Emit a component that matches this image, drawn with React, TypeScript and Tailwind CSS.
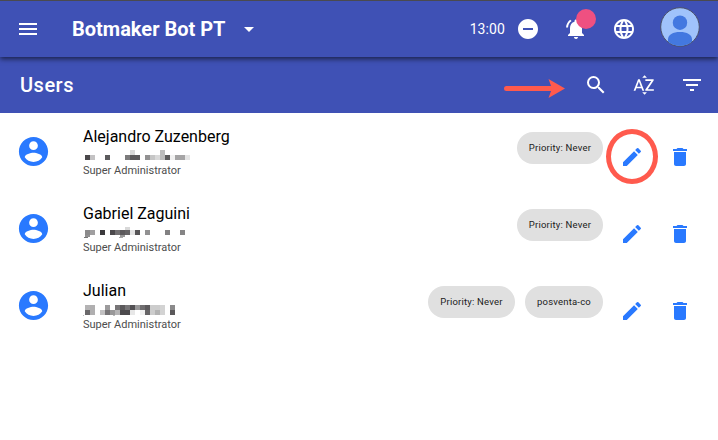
import type { ReactNode } from "react";
import {
  MdArrowDropDown,
  MdDelete,
  MdEdit,
  MdFilterList,
  MdLanguage,
  MdMenu,
  MdNotificationsActive,
  MdRemoveCircle,
  MdSearch,
} from "react-icons/md";

// x, y, width, height, fill; relative to the masked line of a row
type Cell = [number, number, number, number, string];

interface User {
  name: string;
  role: string;
  chips: { label: string; width: string }[];
  mask: Cell[];
  highlighted?: boolean;
}

const users: User[] = [
  {
    name: "Alejandro Zuzenberg",
    role: "Super Administrator",
    chips: [{ label: "Priority: Never", width: "w-[86px]" }],
    highlighted: true,
    mask: [
      [0, 5, 5, 5, "#4a484b"], [5, 5, 5, 5, "#c3c2c3"], [20, 5, 5, 5, "#5c5b5d"],
      [40, 5, 5, 5, "#7c7b7c"], [45, 0, 5, 5, "#d8d8d8"], [45, 5, 10, 5, "#5b595b"],
      [60, 5, 5, 5, "#929192"], [65, 5, 5, 5, "#c6c6c6"], [70, 5, 5, 5, "#d9d9d9"],
      [75, 0, 5, 10, "#bcbcbc"], [80, 5, 5, 5, "#5c5b5c"], [85, 5, 5, 5, "#f1f1f1"],
      [90, 5, 10, 5, "#a5a4a5"], [100, 5, 5, 5, "#e4e4e4"],
    ],
  },
  {
    name: "Gabriel Zaguini",
    role: "Super Administrator",
    chips: [{ label: "Priority: Never", width: "w-[86px]" }],
    mask: [
      [0, 3, 5, 5, "#8b8a8b"], [5, 3, 5, 5, "#a09fa0"], [0, 8, 5, 2, "#919091"], [-1, 10, 4, 1, "#777777"],
      [15, 3, 5, 5, "#3b393c"], [25, 3, 5, 5, "#4b494c"], [30, 3, 5, 5, "#716f71"],
      [35, 3, 5, 5, "#5c5a5c"], [40, 3, 5, 5, "#656365"], [40, 0, 5, 3, "#d8d8d8"],
      [35, 8, 5, 2, "#999999"], [34, 10, 4, 1, "#a8a8a8"],
      [45, 3, 5, 5, "#e4e4e4"], [50, 3, 5, 5, "#565456"], [60, 3, 5, 5, "#929192"],
      [80, 3, 5, 5, "#828182"], [95, 3, 5, 5, "#858485"],
    ],
  },
  {
    name: "Julian",
    role: "Super Administrator",
    chips: [
      { label: "Priority: Never", width: "w-[87px]" },
      { label: "posventa-co", width: "w-[78px]" },
    ],
    mask: [
      [0, 1, 5, 5, "#b4b3b4"], [5, 1, 5, 10, "#b0afb0"], [0, 6, 5, 5, "#6a686a"],
      [-2, 11, 1, 1, "#bbbbbb"], [15, 6, 5, 5, "#c2c1c2"], [20, 1, 5, 5, "#9c9b9c"],
      [20, 6, 5, 5, "#767476"], [25, 6, 5, 5, "#999899"], [30, 1, 5, 5, "#777577"],
      [30, 6, 5, 5, "#b5b4b5"], [28, 11, 2, 1, "#bbbbbb"], [35, 1, 5, 5, "#5b595b"],
      [35, 6, 10, 5, "#4c4a4d"], [40, 1, 5, 5, "#777577"], [45, 1, 5, 5, "#525053"],
      [45, 6, 5, 5, "#e7e7e7"], [50, 1, 5, 5, "#989798"], [55, 1, 5, 5, "#706e70"],
      [55, 6, 5, 5, "#f1f1f1"], [60, 1, 5, 5, "#5c5a5c"], [60, 6, 5, 5, "#666466"],
      [65, 1, 10, 10, "#cccccc"], [70, 6, 5, 5, "#b3b3b3"], [75, 1, 5, 10, "#d3d3d3"],
      [85, 1, 5, 5, "#8b8a8b"], [85, 6, 5, 5, "#5a585a"],
    ],
  },
];

function IconButton({ label, children }: { label: string; children: ReactNode }) {
  return (
    <button aria-label={label} className="block h-6 w-6 shrink-0">
      {children}
    </button>
  );
}

function SortAlphaIcon() {
  return (
    <svg viewBox="0 0 24 24" className="h-6 w-6 fill-current">
      <path d="M14.94 4.66h-4.72l2.36-2.36 2.36 2.36zm-4.69 14.71h4.66l-2.33 2.33-2.33-2.33zM6.1 6.27L1.6 17.73h1.84l.92-2.45h5.11l.92 2.45h1.84L7.74 6.27H6.1zm-1.13 7.37l1.94-5.18 1.94 5.18H4.97zm10.76 2.5h6.12v1.59h-8.53v-1.29l5.92-8.56h-5.88v-1.6h8.3v1.26l-5.93 8.6z" />
    </svg>
  );
}

function ProfilePicture() {
  return (
    <svg viewBox="0 0 40 40" className="mb-1 ml-6 h-10 w-10 shrink-0">
      <defs>
        <clipPath id="profile">
          <circle cx="20" cy="20" r="19" />
        </clipPath>
      </defs>
      <circle cx="20" cy="20" r="19.3" fill="#a0c3fb" stroke="#4b5068" strokeWidth="1" />
      <g fill="#4378e0" clipPath="url(#profile)">
        <circle cx="20" cy="15.7" r="7.2" />
        <path d="M8 40V32.5C8 27.5 13 25 20 25s12 2.500 12 7.500V40z" />
      </g>
    </svg>
  );
}

function TopBar() {
  return (
    <header className="relative z-10 flex h-[57px] items-center border-t border-[#4a4a4f] bg-[#3f51b5] pr-[18px] pl-4 shadow-[0_2px_5px_rgba(0,0,0,0.6)]">
      <IconButton label="Menu">
        <MdMenu size={24} />
      </IconButton>
      <h1 className="ml-8 text-[20px] leading-6 font-bold whitespace-nowrap">Botmaker Bot PT</h1>
      <MdArrowDropDown size={24} className="ml-[11.5px] shrink-0" />
      <span className="ml-auto text-[14px] tracking-[0.1px]">13:00</span>
      <div className="ml-[11px] flex items-center gap-6">
        <IconButton label="Status">
          <MdRemoveCircle size={24} />
        </IconButton>
        <div className="relative">
          <IconButton label="Notifications">
            <MdNotificationsActive size={24} />
          </IconButton>
          <span className="absolute -top-2 left-3 h-5 w-5 rounded-full bg-[#ef5081]" />
        </div>
        <IconButton label="Language">
          <MdLanguage size={24} />
        </IconButton>
      </div>
      <ProfilePicture />
    </header>
  );
}

function SectionBar() {
  return (
    <div className="flex h-14 items-center gap-6 bg-[#3f51b5] pr-[14px] pl-5">
      <h2 className="mr-auto text-[20px] leading-6 font-medium tracking-[0.5px]">Users</h2>
      <svg viewBox="0 0 62 20" className="mt-1.5 -mr-[5px] h-5 w-[62px]">
        <path d="M3.500 10.400H49" stroke="#ff5a4d" strokeWidth="5" strokeLinecap="round" />
        <path d="M45.500 0.900L62 10.400L45.500 19.900L49 10.400z" fill="#ff5a4d" />
      </svg>
      <IconButton label="Search">
        <MdSearch size={24} />
      </IconButton>
      <IconButton label="Sort">
        <SortAlphaIcon />
      </IconButton>
      <IconButton label="Filter">
        <MdFilterList size={24} />
      </IconButton>
    </div>
  );
}

function UserRow({ user }: { user: User }) {
  return (
    <li className="flex h-[77px] items-start pr-[26px] pl-4">
      <svg viewBox="0 0 24 24" className="mt-[21px] h-[35px] w-[35px] shrink-0 fill-[#2979ff]">
        <path d="M12 2C6.480 2 2 6.480 2 12s4.480 10 10 10 10-4.480 10-10S17.520 2 12 2zm0 3c1.660 0 3 1.340 3 3s-1.340 3-3 3-3-1.340-3-3 1.340-3 3-3zm0 14.200c-2.500 0-4.710-1.280-6-3.220.03-1.990 4-3.080 6-3.080 1.990 0 5.970 1.090 6 3.080-1.290 1.940-3.500 3.220-6 3.220z" />
      </svg>
      <div className="ml-8 pt-[13px]">
        <p className="text-[16px] leading-[22px] text-black">{user.name}</p>
        <svg viewBox="0 0 112 12" className="mt-0.5 block h-3 w-28" shapeRendering="crispEdges">
          {user.mask.map(([x, y, w, h, fill], i) => (
            <rect key={i} x={x + 2} y={y} width={w} height={h} fill={fill} />
          ))}
        </svg>
        <p className="mt-px text-[11px] leading-4 text-[#4d4d4d]">{user.role}</p>
      </div>
      <div className="mt-[19px] ml-auto flex gap-2.5">
        {user.chips.map((chip) => (
          <span
            key={chip.label}
            className={`${chip.width} flex h-8 items-center justify-center rounded-full bg-[#e0e0e0] text-[9.5px] tracking-[0.2px] whitespace-nowrap text-[#212121]`}
          >
            {chip.label}
          </span>
        ))}
      </div>
      <div className="mt-8 ml-[17px] flex gap-6 text-[#2979ff]">
        <div className="relative">
          <IconButton label="Edit">
            <MdEdit size={24} />
          </IconButton>
          {user.highlighted && (
            <span className="absolute -top-4 -left-3.5 h-[55px] w-[52px] rounded-[50%] border-[5px] border-[#ff5a4d]" />
          )}
        </div>
        <IconButton label="Delete">
          <MdDelete size={24} />
        </IconButton>
      </div>
    </li>
  );
}

export default function App() {
  return (
    <div className="h-[440px] w-[718px] overflow-hidden bg-white font-[Roboto,sans-serif] text-white">
      <TopBar />
      <SectionBar />
      <ul>
        {users.map((user) => (
          <UserRow key={user.name} user={user} />
        ))}
      </ul>
    </div>
  );
}
